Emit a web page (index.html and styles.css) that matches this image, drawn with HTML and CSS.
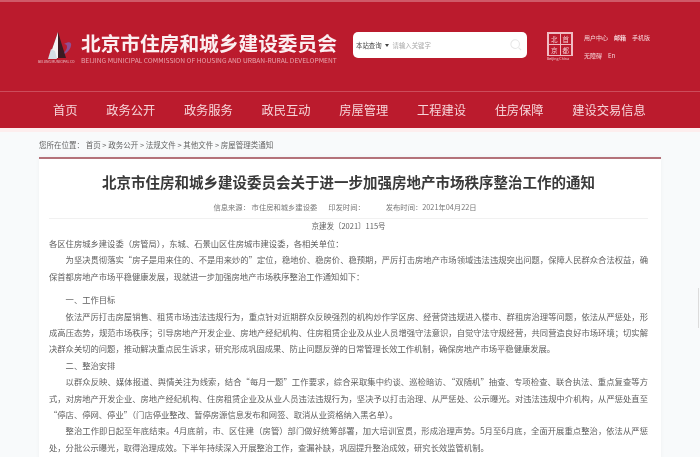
FILE: index.html
```html
<!DOCTYPE html>
<html lang="zh-CN">
<head>
<meta charset="utf-8">
<title>北京市住房和城乡建设委员会</title>
<link rel="stylesheet" href="styles.css">
</head>
<body>
<header class="header">
  <div class="top">
    <div class="brand">
      <div class="emblem">
        <svg class="emblem-svg" viewBox="0 0 36 28" width="36" height="28" aria-hidden="true">
          <path d="M26 12c5-3 8-2 7 2-1 5-7 9-12 11 4-3 8-7 8-10 0-2-1-3-3-3z" fill="#8f4f92"/>
          <path d="M20 0L11 26h17z" fill="#3a1a22"/>
          <path d="M20 0L11 26h9l0-12z" fill="#f5f1f2"/>
          <path d="M10 27l3-10 4 2 2 8z" fill="#d5dde4"/>
        </svg>
        <span class="emblem-text">BEIJING MUNICIPAL CO</span>
      </div>
      <div class="brand-text">
        <div class="brand-cn">北京市住房和城乡建设委员会</div>
        <div class="brand-en">BEIJING MUNICIPAL COMMISSION OF HOUSING AND URBAN-RURAL DEVELOPMENT</div>
      </div>
    </div>
    <form class="search">
      <span class="search-scope">本站查询</span>
      <span class="search-caret"></span>
      <span class="search-hint">请输入关键字</span>
      <svg class="search-icon" viewBox="0 0 14 14" width="12" height="12" aria-hidden="true">
        <circle cx="6" cy="6" r="5" fill="none" stroke="#e6e6e6" stroke-width="1.2"/>
        <path d="M10 10l3 3" stroke="#e6e6e6" stroke-width="1.2"/>
      </svg>
    </form>
    <div class="capital">
      <div class="capital-grid">
        <span>北</span><span>首</span><span>京</span><span>都</span>
      </div>
      <span class="capital-en">Beijing China</span>
    </div>
    <div class="links">
      <div class="links-row"><a>用户中心</a><a class="strong">邮箱</a><a>手机版</a></div>
      <div class="links-row"><a>无障碍</a><a>En</a></div>
    </div>
  </div>
  <nav class="nav">
    <a>首页</a><a>政务公开</a><a>政务服务</a><a>政民互动</a><a>房屋管理</a><a>工程建设</a><a>住房保障</a><a>建设交易信息</a>
  </nav>
</header>
<div class="stripe"></div>
<main class="main">
  <div class="crumbs">您所在位置： 首页 &gt; 政务公开 &gt; 法规文件 &gt; 其他文件 &gt; 房屋管理类通知</div>
  <article class="card">
    <h1 class="title">北京市住房和城乡建设委员会关于进一步加强房地产市场秩序整治工作的通知</h1>
    <div class="meta"><span>信息来源： 市住房和城乡建设委</span><span class="meta-issued">印发时间：</span><span>发布时间：2021年04月22日</span></div>
    <div class="docno">京建发〔2021〕115号</div>
    <p class="flush">各区住房城乡建设委（房管局），东城、石景山区住房城市建设委，各相关单位：</p>
    <p>为坚决贯彻落实“房子是用来住的、不是用来炒的”定位，稳地价、稳房价、稳预期，严厉打击房地产市场领域违法违规突出问题，保障人民群众合法权益，确保首都房地产市场平稳健康发展，现就进一步加强房地产市场秩序整治工作通知如下：</p>
    <p class="section">一、工作目标</p>
    <p>依法严厉打击房屋销售、租赁市场违法违规行为，重点针对近期群众反映强烈的机构炒作学区房、经营贷违规进入楼市、群租房治理等问题，依法从严惩处，形成高压态势，规范市场秩序；引导房地产开发企业、房地产经纪机构、住房租赁企业及从业人员增强守法意识，自觉守法守规经营，共同营造良好市场环境；切实解决群众关切的问题，推动解决重点民生诉求，研究形成巩固成果、防止问题反弹的日常管理长效工作机制，确保房地产市场平稳健康发展。</p>
    <p>二、整治安排</p>
    <p>以群众反映、媒体报道、舆情关注为线索，结合“每月一题”工作要求，综合采取集中约谈、巡检暗访、“双随机”抽查、专项检查、联合执法、重点复查等方式，对房地产开发企业、房地产经纪机构、住房租赁企业及从业人员违法违规行为，坚决予以打击治理、从严惩处、公示曝光。对违法违规中介机构，从严惩处直至“停店、停网、停业”（门店停业整改、暂停房源信息发布和网签、取消从业资格纳入黑名单）。</p>
    <p>整治工作即日起至年底结束。4月底前，市、区住建（房管）部门做好统筹部署，加大培训宣贯，形成治理声势。5月至6月底，全面开展重点整治，依法从严惩处，分批公示曝光，取得治理成效。下半年持续深入开展整治工作，查漏补缺，巩固提升整治成效，研究长效监管机制。</p>
  </article>
</main>
<div class="scroll-mark"></div>
</body>
</html>
```
FILE: styles.css
```css
* { box-sizing: border-box; }
html, body { margin: 0; padding: 0; }
body {
  position: relative;
  width: 700px;
  height: 457px;
  overflow: hidden;
  background: #f8fafb;
  font-family: "Noto Sans CJK SC", "Liberation Sans", sans-serif;
  color: #5f5f5f;
}
.header {
  height: 128px;
  background: #bb1b2d;
  border-top: 2px solid #cf5a68;
  color: #fff;
  filter: blur(.4px);
}
.top {
  height: 90px;
  display: flex;
  padding: 30px 0 0 38px;
  border-bottom: 1px solid #cc4c5b;
}
.brand { display: flex; width: 315px; }
.emblem { width: 43px; display: flex; flex-direction: column; }
.emblem-svg { display: block; }
.emblem-text { font-size: 3.4px; line-height: 4px; white-space: nowrap; color: #e8c0c6; }
.brand-text { margin-top: -1px; }
.brand-cn { font-size: 19.7px; line-height: 24px; font-weight: 700; white-space: nowrap; color: #fbeef0; }
.brand-en { font-size: 6.66px; line-height: 8px; margin-top: 1px; white-space: nowrap; color: #e9a6af; }
.search {
  width: 174px;
  height: 26px;
  display: flex;
  align-items: center;
  padding: 0 5px 0 3px;
  background: #fff;
  border-radius: 5px;
  font-size: 6.4px;
  color: #444;
}
.search-caret {
  width: 0;
  height: 0;
  margin: 1px 4px 0 3px;
  border: 2.5px solid transparent;
  border-top: 3px solid #444;
  border-bottom: 0;
}
.search-hint { flex: 1; color: #a8a8a8; }
.capital { width: 37px; margin-left: 20px; }
.capital-grid {
  width: 26px;
  height: 24px;
  display: grid;
  grid-template-columns: 1fr 1fr;
  gap: 1px;
  padding: 1px;
  background: #f0bcc3;
  border: 1px solid #f0bcc3;
  font-size: 6.5px;
  line-height: 10px;
  text-align: center;
  color: #f3c9cf;
}
.capital-grid span { background: #bb1b2d; }
.capital-en { display: block; width: 28px; font-size: 3.6px; line-height: 6px; white-space: nowrap; color: #f3c9cf; }
.links { font-size: 6px; color: #f6d6da; }
.links-row { display: flex; gap: 6px; height: 18px; line-height: 12px; }
.links-row .strong { font-weight: 700; }
.nav {
  height: 36px;
  display: flex;
  gap: 28.7px;
  align-items: center;
  padding-left: 53px;
  font-size: 12.25px;
  color: #f6d5d9;
}
.stripe { height: 4px; background: #fdeeee; }
.main { padding: 0 39px; filter: blur(.4px); }
.crumbs { height: 25px; font-size: 7.5px; line-height: 26px; white-space: nowrap; color: #666; }
.card {
  height: 310px;
  padding: 0 13px 0 10px;
  background: #fff;
  border-top: 2px solid #b4727a;
  box-shadow: 0 0 4px rgba(0, 0, 0, .04);
  font-size: 8.3px;
  line-height: 16.4px;
}
.title {
  margin: 0;
  padding-top: 12px;
  font-size: 14.5px;
  line-height: 22px;
  font-weight: 700;
  text-align: center;
  white-space: nowrap;
  color: #3a3a3a;
}
.meta {
  display: flex;
  justify-content: center;
  height: 26px;
  padding: 6px 7px 0 0;
  font-size: 7.3px;
  border-bottom: 1px solid #f1f1f1;
  color: #777;
}
.meta-issued { margin: 0 21px 0 11px; }
.docno { text-align: center; font-size: 7.5px; height: 16px; line-height: 14px; }
.card p { margin: 0; text-indent: 2em; text-align: justify; }
.card p.flush { text-indent: 0; }
.card p.section { margin-top: 7px; }
.scroll-mark {
  position: absolute;
  left: 698px;
  top: 288px;
  width: 1px;
  height: 40px;
  background: #dcdcdc;
}
```
